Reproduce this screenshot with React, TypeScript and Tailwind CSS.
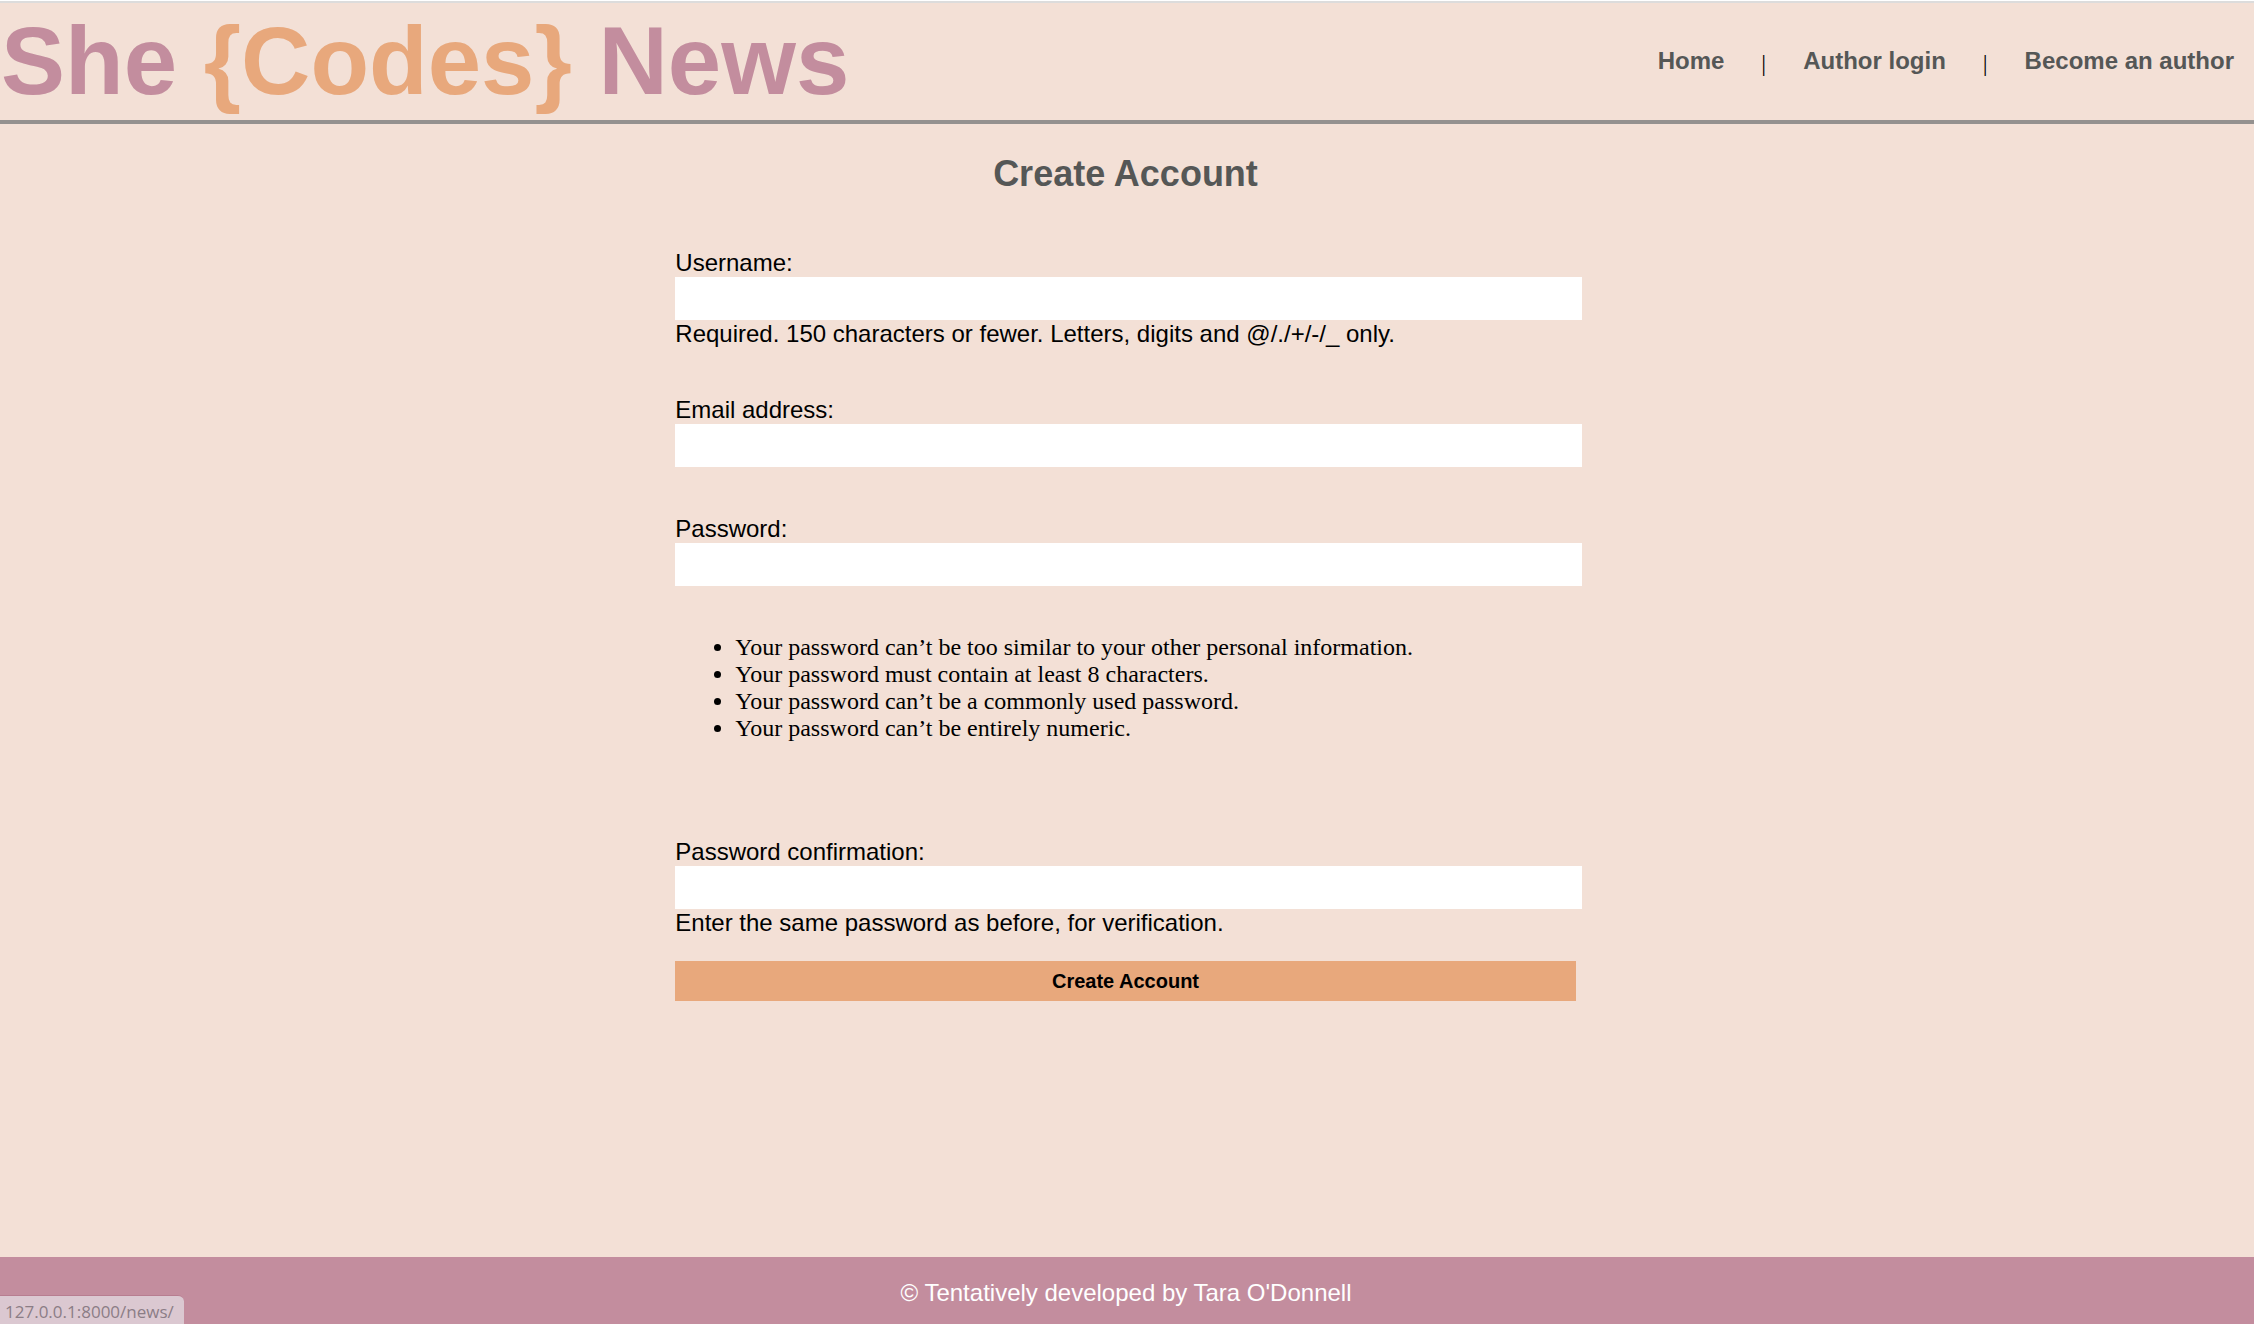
import type { ReactNode } from "react";

const navLinks = ["Home", "Author login", "Become an author"];

const passwordRules = [
  "Your password can’t be too similar to your other personal information.",
  "Your password must contain at least 8 characters.",
  "Your password can’t be a commonly used password.",
  "Your password can’t be entirely numeric.",
];

function Header() {
  return (
    <header className="flex items-start justify-between border-t-2 border-b-4 border-t-[#dcdcdc] border-b-[#94918f]">
      <h1 className="h-[117px] pt-[3px] pl-px text-[96px] leading-[110px] font-bold whitespace-pre text-[#c38d9e]">
        She <span className="text-[#e8a87c]">{"{Codes}"}</span> News
      </h1>
      <nav className="flex items-start pt-11 pr-5 text-2xl leading-[27px]">
        {navLinks.map((label, i) => (
          <div key={label} className="flex items-start">
            {i > 0 && (
              <span
                aria-hidden="true"
                className="mx-[37px] pt-[3px] font-['Liberation_Serif','Times_New_Roman',serif] text-black"
              >
                |
              </span>
            )}
            <a href="#" className="font-bold text-[#555756]">
              {label}
            </a>
          </div>
        ))}
      </nav>
    </header>
  );
}

function Field({
  id,
  label,
  type,
  children,
}: {
  id: string;
  label: string;
  type: string;
  children?: ReactNode;
}) {
  return (
    <div className="flex flex-col leading-7">
      <label htmlFor={id}>{label}</label>
      <input id={id} type={type} className="-mr-1.5 h-[43px] bg-white px-1 outline-none" />
      {children}
    </div>
  );
}

export default function App() {
  return (
    <div className="flex min-h-screen flex-col border-t border-white bg-[#f3e0d6] font-['Liberation_Sans',Arial,sans-serif] text-2xl leading-[27px] text-black">
      <Header />
      <div className="grow pr-[3px]">
        <main className="mx-auto w-2/5">
          <h2 className="pt-[29px] text-center text-4xl leading-[42px] font-bold text-[#555756]">
            Create Account
          </h2>
          <form className="flex flex-col pt-[54px]" onSubmit={(e) => e.preventDefault()}>
            <div className="flex flex-col gap-12">
              <Field id="username" label="Username:" type="text">
                <p>Required. 150 characters or fewer. Letters, digits and @/./+/-/_ only.</p>
              </Field>
              <Field id="email" label="Email address:" type="email" />
              <Field id="password" label="Password:" type="password" />
              <ul className="mb-12 list-disc pl-[60px] font-['Liberation_Serif','Times_New_Roman',serif]">
                {passwordRules.map((rule) => (
                  <li key={rule}>{rule}</li>
                ))}
              </ul>
              <Field id="confirmation" label="Password confirmation:" type="password">
                <p>Enter the same password as before, for verification.</p>
              </Field>
            </div>
            <button type="submit" className="mt-6 h-10 bg-[#e8a87c] text-xl font-bold">
              Create Account
            </button>
          </form>
        </main>
      </div>
      <footer className="bg-[#c38d9e] pt-[22px] pr-0.5 pb-[18px] text-center text-white">
        © Tentatively developed by Tara O'Donnell
      </footer>
      <div className="fixed bottom-0 left-0 rounded-tr-md border-t border-[#b77d90] bg-[#dbc8d1] pt-1 pr-2.5 pl-[5px] font-['Open_Sans',sans-serif] text-[17px] leading-6 text-[#8b7d86]">
        127.0.0.1:8000/news/
      </div>
    </div>
  );
}
